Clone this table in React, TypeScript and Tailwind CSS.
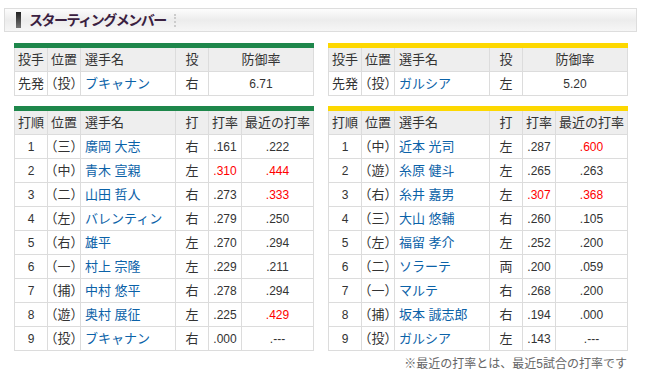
import { Fragment } from "react";

type Batter = {
  order: number;
  pos: string;
  name: string;
  hand: string;
  avg: string;
  recent: string;
  avgHot?: boolean;
  recentHot?: boolean;
};

type Team = {
  color: string;
  pitcher: { name: string; hand: string; era: string };
  batters: Batter[];
};

const teams: Team[] = [
  {
    color: "bg-[#1e874b]",
    pitcher: { name: "ブキャナン", hand: "右", era: "6.71" },
    batters: [
      { order: 1, pos: "（三）", name: "廣岡 大志", hand: "右", avg: ".161", recent: ".222" },
      { order: 2, pos: "（中）", name: "青木 宣親", hand: "左", avg: ".310", recent: ".444", avgHot: true, recentHot: true },
      { order: 3, pos: "（二）", name: "山田 哲人", hand: "右", avg: ".273", recent: ".333", recentHot: true },
      { order: 4, pos: "（左）", name: "バレンティン", hand: "右", avg: ".279", recent: ".250" },
      { order: 5, pos: "（右）", name: "雄平", hand: "左", avg: ".270", recent: ".294" },
      { order: 6, pos: "（一）", name: "村上 宗隆", hand: "左", avg: ".229", recent: ".211" },
      { order: 7, pos: "（捕）", name: "中村 悠平", hand: "右", avg: ".278", recent: ".294" },
      { order: 8, pos: "（遊）", name: "奥村 展征", hand: "左", avg: ".225", recent: ".429", recentHot: true },
      { order: 9, pos: "（投）", name: "ブキャナン", hand: "右", avg: ".000", recent: ".---" },
    ],
  },
  {
    color: "bg-[#fdd800]",
    pitcher: { name: "ガルシア", hand: "左", era: "5.20" },
    batters: [
      { order: 1, pos: "（中）", name: "近本 光司", hand: "左", avg: ".287", recent: ".600", recentHot: true },
      { order: 2, pos: "（遊）", name: "糸原 健斗", hand: "左", avg: ".265", recent: ".263" },
      { order: 3, pos: "（右）", name: "糸井 嘉男", hand: "左", avg: ".307", recent: ".368", avgHot: true, recentHot: true },
      { order: 4, pos: "（三）", name: "大山 悠輔", hand: "右", avg: ".260", recent: ".105" },
      { order: 5, pos: "（左）", name: "福留 孝介", hand: "左", avg: ".252", recent: ".200" },
      { order: 6, pos: "（二）", name: "ソラーテ", hand: "両", avg: ".200", recent: ".059" },
      { order: 7, pos: "（一）", name: "マルテ", hand: "右", avg: ".268", recent: ".200" },
      { order: 8, pos: "（捕）", name: "坂本 誠志郎", hand: "右", avg: ".194", recent: ".000" },
      { order: 9, pos: "（投）", name: "ガルシア", hand: "左", avg: ".143", recent: ".---" },
    ],
  },
];

const cell = "bg-white h-[23px] flex items-center whitespace-nowrap";
const head = "bg-[#eeeeee] h-[23px] flex items-center whitespace-nowrap";

function PitcherTable({ team }: { team: Team }) {
  return (
    <div>
      <div className={`h-[5px] ${team.color}`} />
      <div className="grid grid-cols-[32px_32px_94px_32px_104px] gap-px bg-[#dcdcdc] p-px pt-0">
        <div className={`${head} justify-center`}>投手</div>
        <div className={`${head} justify-center`}>位置</div>
        <div className={`${head} pl-[4px]`}>選手名</div>
        <div className={`${head} justify-center`}>投</div>
        <div className={`${head} justify-center`}>防御率</div>
        <div className={`${cell} justify-center`}>先発</div>
        <div className={`${cell} justify-center`}>（投）</div>
        <div className={`${cell} pl-[4px] text-[#0b62a8]`}>{team.pitcher.name}</div>
        <div className={`${cell} justify-center`}>{team.pitcher.hand}</div>
        <div className={`${cell} justify-center text-[12px]`}>{team.pitcher.era}</div>
      </div>
    </div>
  );
}

function BatterTable({ team }: { team: Team }) {
  return (
    <div>
      <div className={`h-[5px] ${team.color}`} />
      <div className="grid grid-cols-[32px_32px_94px_32px_32px_71px] gap-px bg-[#dcdcdc] p-px pt-0">
        <div className={`${head} justify-center`}>打順</div>
        <div className={`${head} justify-center`}>位置</div>
        <div className={`${head} pl-[4px]`}>選手名</div>
        <div className={`${head} justify-center`}>打</div>
        <div className={`${head} justify-center`}>打率</div>
        <div className={`${head} justify-center`}>最近の打率</div>
        {team.batters.map((b) => (
          <Fragment key={b.order}>
            <div className={`${cell} justify-center text-[12px]`}>{b.order}</div>
            <div className={`${cell} justify-center`}>{b.pos}</div>
            <div className={`${cell} pl-[4px] text-[#0b62a8]`}>{b.name}</div>
            <div className={`${cell} justify-center`}>{b.hand}</div>
            <div className={`${cell} justify-center text-[12px] ${b.avgHot ? "text-[#ff0000]" : ""}`}>{b.avg}</div>
            <div className={`${cell} justify-center text-[12px] ${b.recentHot ? "text-[#ff0000]" : ""}`}>{b.recent}</div>
          </Fragment>
        ))}
      </div>
    </div>
  );
}

export default function App() {
  return (
    <div className="w-[645px] h-[386px] bg-white text-[#333333] text-[13px] font-['Liberation_Sans','Noto_Sans_CJK_JP',sans-serif] pt-[8px]">
      {/* section heading */}
      <div className="ml-[4px] mr-[8px] h-[24px] border border-[#dddddd] bg-gradient-to-b from-[#fdfdfd] via-[#ececec] to-[#f6f6f6] flex items-center">
        <div className="ml-[11px] w-[5px] h-[16px] bg-gradient-to-b from-[#222222] to-[#777777]" />
        <div className="ml-[8px] text-[14px] font-bold tracking-[-1.5px] text-[#3a2040]">スターティングメンバー</div>
        <div className="ml-[8px] h-[13px] border-l-2 border-dotted border-[#cccccc]" />
      </div>

      <div className="mt-[11px] pl-[14px] flex gap-[14px]">
        {teams.map((t, i) => (
          <div key={i} className="w-[300px] flex flex-col gap-[10px]">
            <PitcherTable team={t} />
            <BatterTable team={t} />
          </div>
        ))}
      </div>

      <div className="w-[627px] text-right text-[12px] text-[#666666] mt-[4px]">※最近の打率とは、最近5試合の打率です</div>
    </div>
  );
}
